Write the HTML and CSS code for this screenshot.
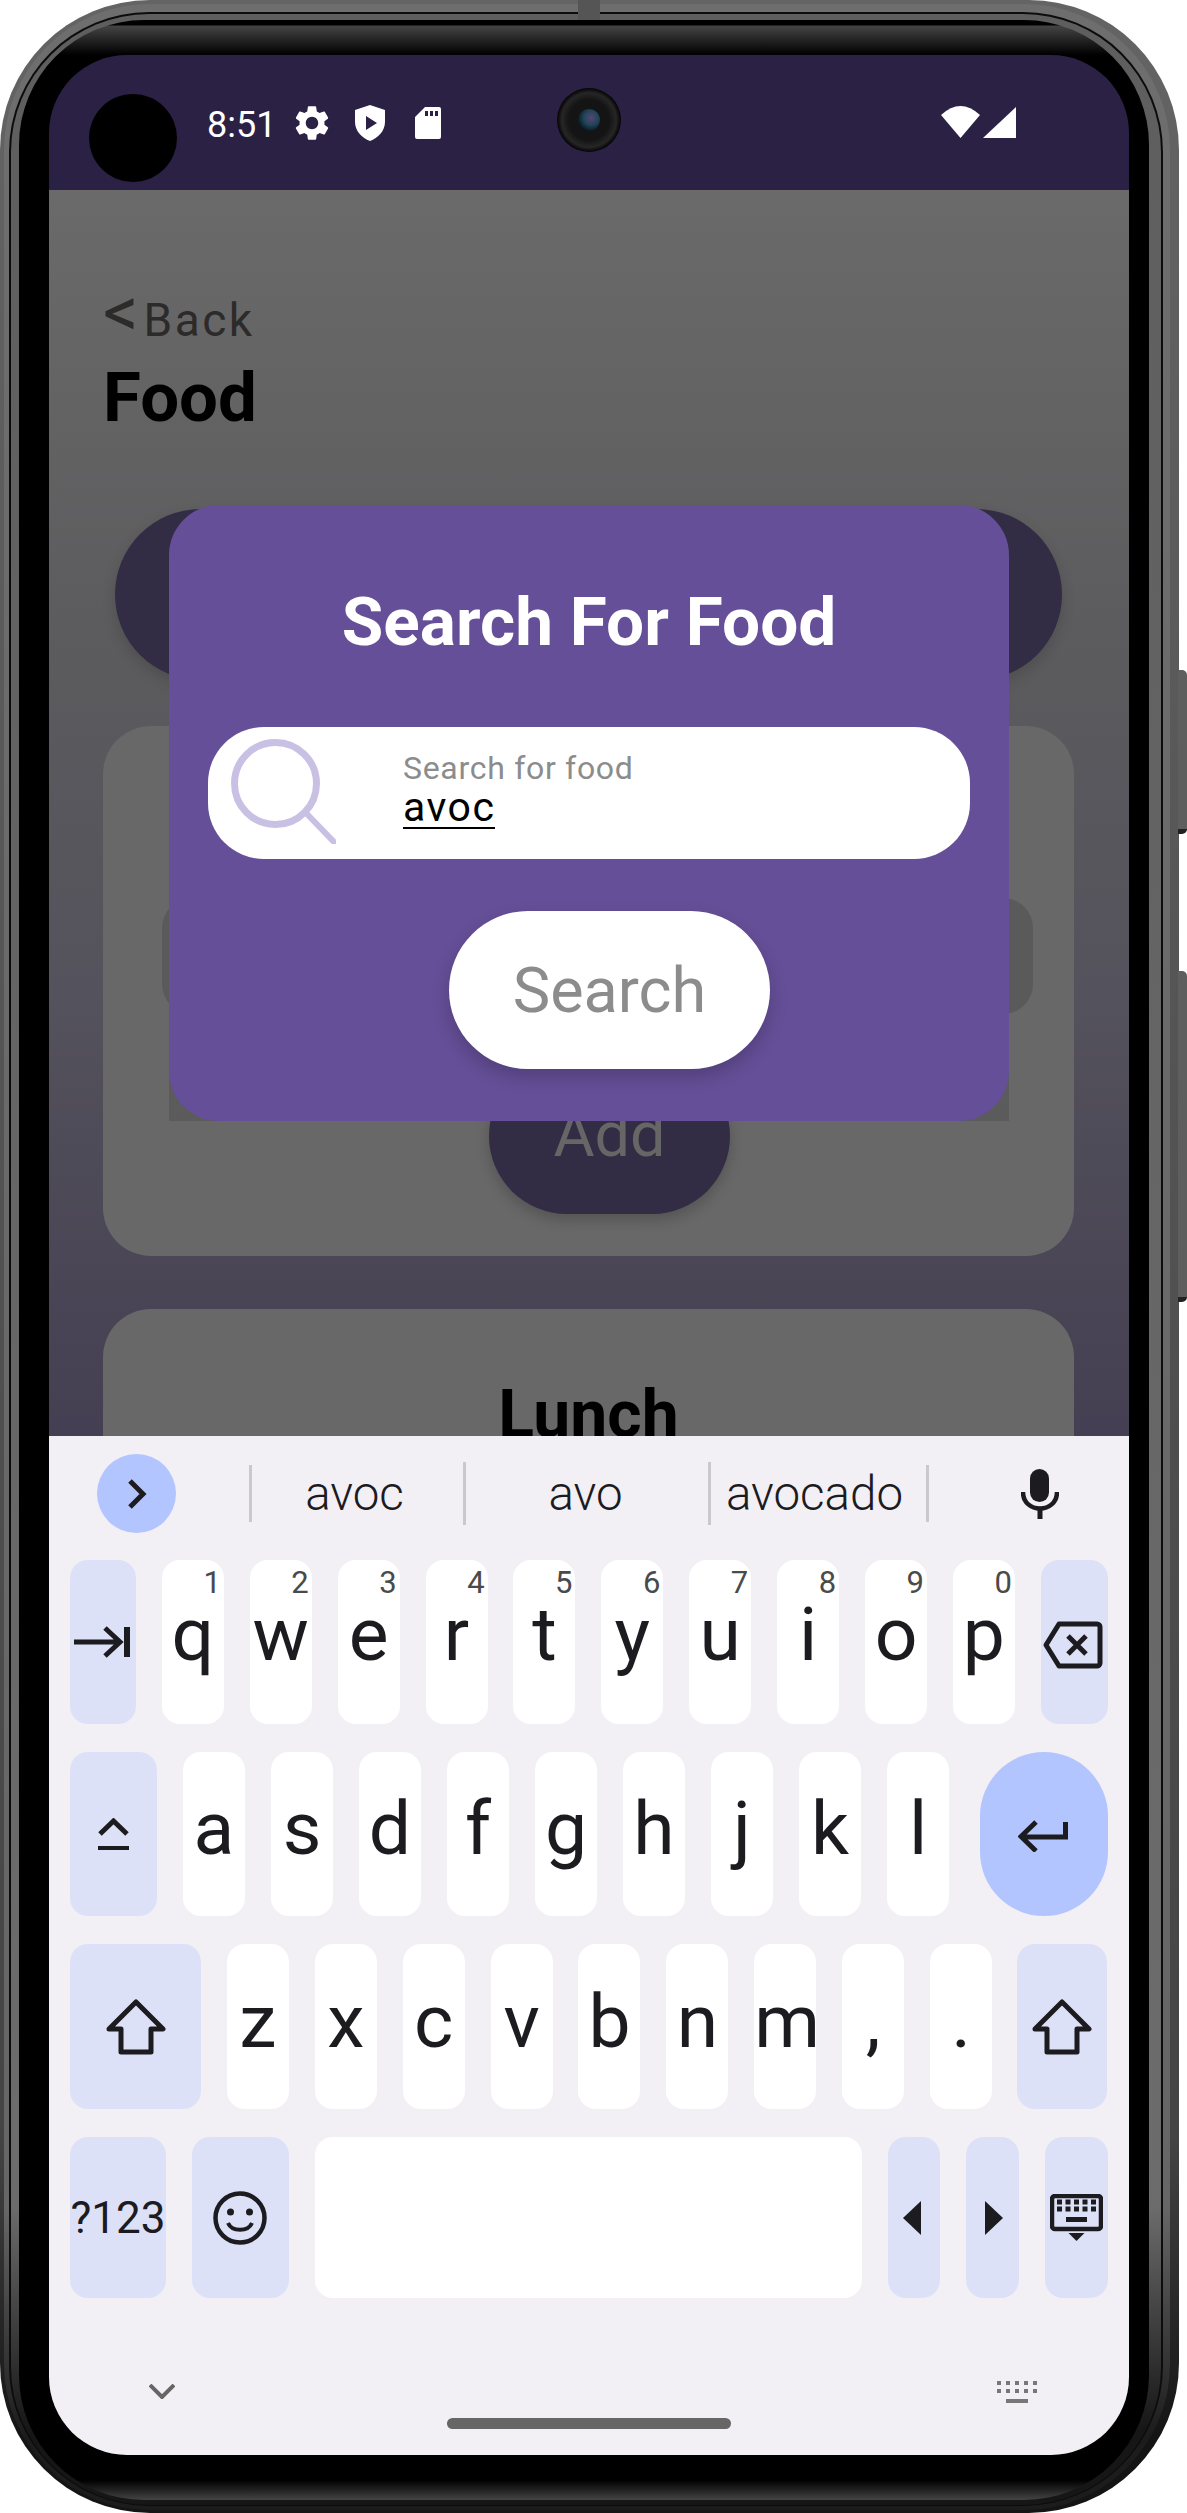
FILE: index.html
```html
<!DOCTYPE html>
<html lang="en">
<head>
    <meta charset="UTF-8">
    <title>Search For Food</title>
    <link rel="stylesheet" href="styles.css">
</head>
<body>
    <div class="device">
        <div class="side-btn btn-power"></div>
        <div class="side-btn btn-volume"></div>
        <div class="top-mark"></div>
        <div class="phone">
            <div class="ring-b">
                <div class="ring-c">
                    <div class="ring-d">
                        <div class="bezel">
                            <div class="screen">

                                <!-- status bar -->
                                <div class="status">
                                    <div class="hole"></div>
                                    <div class="time">8:51</div>
                                    <svg class="st-gear" width="34" height="34" viewBox="2.6 2.2 18.8 19.6"><path fill="#fff" d="M19.14 12.94c.04-.3.06-.61.06-.94 0-.32-.02-.64-.07-.94l2.03-1.58c.18-.14.23-.41.12-.61l-1.92-3.32c-.12-.22-.37-.29-.59-.22l-2.39.96c-.5-.38-1.03-.7-1.62-.94l-.36-2.54c-.04-.24-.24-.41-.48-.41h-3.84c-.24 0-.43.17-.47.41l-.36 2.54c-.59.24-1.13.57-1.62.94l-2.39-.96c-.22-.08-.47 0-.59.22L2.74 8.87c-.12.21-.08.47.12.61l2.03 1.58c-.05.3-.09.63-.09.94s.02.64.07.94l-2.03 1.58c-.18.14-.23.41-.12.61l1.92 3.32c.12.22.37.29.59.22l2.39-.96c.5.38 1.03.7 1.62.94l.36 2.54c.05.24.24.41.48.41h3.84c.24 0 .44-.17.47-.41l.36-2.54c.59-.24 1.13-.56 1.62-.94l2.39.96c.22.08.47 0 .59-.22l1.92-3.32c.12-.22.07-.47-.12-.61l-2.01-1.58zM12 15.6c-1.98 0-3.6-1.62-3.6-3.6s1.62-3.6 3.6-3.6 3.6 1.62 3.6 3.6-1.62 3.6-3.6 3.6z"/></svg>
                                    <svg class="st-shield" width="30" height="36" viewBox="0 0 30 36"><path fill="#fff" fill-rule="evenodd" d="M15 0 L30 5 V17 C30 26 23 33 15 36 C7 33 0 26 0 17 V5 Z M11 11 V25 L22 18 Z"/></svg>
                                    <svg class="st-sd" width="26" height="32" viewBox="0 0 26 32"><path fill="#fff" fill-rule="evenodd" d="M10 0 H24 a2 2 0 0 1 2 2 V30 a2 2 0 0 1-2 2 H2 a2 2 0 0 1-2-2 V10 Z M10 4 V9 H13 V4 Z M15 4 V9 H18 V4 Z M20 4 V9 H23 V4 Z"/></svg>
                                    <svg class="st-wifi" width="39" height="32" viewBox="0 0 39 32"><path fill="#fff" d="M0 9 Q19.5 -9 39 9 L19.5 32 Z"/></svg>
                                    <svg class="st-signal" width="33" height="31" viewBox="0 0 33 31"><path fill="#fff" d="M33 0 V31 H0 Z"/></svg>
                                </div>
                                <div class="camera"><div class="lens"></div></div>

                                <!-- the app, dimmed behind the dialog -->
                                <div class="app">
                                    <div class="back"><span class="back-arrow">&lt;</span><span class="back-text">Back</span></div>
                                    <h1 class="page-title">Food</h1>
                                    <div class="dark-pill"></div>
                                    <div class="card card-add">
                                        <div class="card-input"></div>
                                        <div class="add-btn">Add</div>
                                    </div>
                                    <div class="card card-meal">
                                        <h2 class="meal-title">Lunch</h2>
                                    </div>

                                    <div class="dialog">
                                        <div class="dialog-box">
                                            <h2 class="dialog-title">Search For Food</h2>
                                            <div class="search-field">
                                                <svg class="search-icon" width="105" height="105" viewBox="0 0 105 105"><ellipse cx="44.5" cy="44.5" rx="41" ry="41" fill="none" stroke="#c9c1e3" stroke-width="7"/><path d="M76 75 L103 103" fill="none" stroke="#c9c1e3" stroke-width="6" stroke-linecap="round"/></svg>
                                                <div class="search-text">
                                                    <div class="search-label">Search for food</div>
                                                    <div class="search-value">avoc</div>
                                                </div>
                                            </div>
                                            <div class="search-btn">Search</div>
                                        </div>
                                    </div>
                                </div>

                                <!-- keyboard -->
                                <div class="keyboard">
                                    <div class="suggest">
                                        <div class="suggest-toggle">
                                            <svg width="20" height="32" viewBox="0 0 20 32"><path d="M3 3 L16 16 L3 29" fill="none" stroke="#1c1b1f" stroke-width="5"/></svg>
                                        </div>
                                        <div class="divider short first"></div>
                                        <div class="word w1">avoc</div>
                                        <div class="divider"></div>
                                        <div class="word w2">avo</div>
                                        <div class="divider"></div>
                                        <div class="word w3">avocado</div>
                                        <div class="divider short"></div>
                                        <svg class="mic" width="38" height="50" viewBox="0 0 38 50"><rect x="9" y="0" width="19" height="33" rx="9.5" fill="#1c1b1f"/><path d="M2 23 C2 45 36 45 36 23" fill="none" stroke="#1c1b1f" stroke-width="4.5"/><path d="M19 38 V50" stroke="#1c1b1f" stroke-width="5"/></svg>
                                    </div>

                                    <div class="row row-1">
                                        <div class="key mod w-tab">
                                            <svg class="icon-tab" width="56" height="32" viewBox="0 0 56 32"><path d="M0 16 H47 M31 2 L46 16 L31 30" fill="none" stroke="#1c1b1f" stroke-width="5"/><rect x="50" y="1" width="6" height="30" fill="#1c1b1f"/></svg>
                                        </div>
                                        <div class="key">q<span class="hint">1</span></div>
                                        <div class="key">w<span class="hint">2</span></div>
                                        <div class="key">e<span class="hint">3</span></div>
                                        <div class="key">r<span class="hint">4</span></div>
                                        <div class="key">t<span class="hint">5</span></div>
                                        <div class="key">y<span class="hint">6</span></div>
                                        <div class="key">u<span class="hint">7</span></div>
                                        <div class="key">i<span class="hint">8</span></div>
                                        <div class="key">o<span class="hint">9</span></div>
                                        <div class="key">p<span class="hint">0</span></div>
                                        <div class="key mod w-back">
                                            <svg class="icon-back" width="60" height="48" viewBox="0 0 60 48"><path d="M16 3 H54 a3 3 0 0 1 3 3 V42 a3 3 0 0 1-3 3 H16 L3 24 Z" fill="none" stroke="#1c1b1f" stroke-width="5" stroke-linejoin="round"/><path d="M25 15 L43 33 M43 15 L25 33" fill="none" stroke="#1c1b1f" stroke-width="5"/></svg>
                                        </div>
                                    </div>

                                    <div class="row row-2">
                                        <div class="key mod w-alt">
                                            <svg width="31" height="32" viewBox="0 0 31 32"><path d="M2 16 L15.5 3 L29 16" fill="none" stroke="#1c1b1f" stroke-width="5"/><rect x="0" y="28" width="31" height="4" fill="#1c1b1f"/></svg>
                                        </div>
                                        <div class="key">a</div>
                                        <div class="key">s</div>
                                        <div class="key">d</div>
                                        <div class="key">f</div>
                                        <div class="key">g</div>
                                        <div class="key">h</div>
                                        <div class="key">j</div>
                                        <div class="key">k</div>
                                        <div class="key">l</div>
                                        <div class="key enter">
                                            <svg class="icon-enter" width="50" height="32" viewBox="0 0 50 32"><path d="M47.5 2 V17 H5 M18 2 L3 16.5 L18 31" fill="none" stroke="#1c1b1f" stroke-width="5"/></svg>
                                        </div>
                                    </div>

                                    <div class="row row-3">
                                        <div class="key mod w-shift">
                                            <svg width="60" height="56" viewBox="0 0 60 56"><path d="M30 3 L57 30 H45 V53 H15 V30 H3 Z" fill="none" stroke="#1c1b1f" stroke-width="5" stroke-linejoin="round"/></svg>
                                        </div>
                                        <div class="key">z</div>
                                        <div class="key">x</div>
                                        <div class="key">c</div>
                                        <div class="key">v</div>
                                        <div class="key">b</div>
                                        <div class="key">n</div>
                                        <div class="key">m</div>
                                        <div class="key">,</div>
                                        <div class="key">.</div>
                                        <div class="key mod w-shift-r">
                                            <svg width="60" height="56" viewBox="0 0 60 56"><path d="M30 3 L57 30 H45 V53 H15 V30 H3 Z" fill="none" stroke="#1c1b1f" stroke-width="5" stroke-linejoin="round"/></svg>
                                        </div>
                                    </div>

                                    <div class="row row-4">
                                        <div class="key mod w-num">?123</div>
                                        <div class="key mod w-emoji">
                                            <svg class="icon-emoji" width="54" height="54" viewBox="0 0 54 54"><circle cx="27" cy="27" r="24.5" fill="none" stroke="#1c1b1f" stroke-width="4.5"/><circle cx="17.5" cy="21" r="3.5" fill="#1c1b1f"/><circle cx="36.5" cy="21" r="3.5" fill="#1c1b1f"/><path d="M15 32 C19 41 35 41 39 32" fill="none" stroke="#1c1b1f" stroke-width="4"/></svg>
                                        </div>
                                        <div class="key w-space"></div>
                                        <div class="key mod w-left">
                                            <svg class="icon-left" width="18" height="34" viewBox="0 0 18 34"><path d="M18 0 V34 L0 17 Z" fill="#1c1b1f"/></svg>
                                        </div>
                                        <div class="key mod w-right">
                                            <svg class="icon-right" width="18" height="34" viewBox="0 0 18 34"><path d="M0 0 V34 L18 17 Z" fill="#1c1b1f"/></svg>
                                        </div>
                                        <div class="key mod w-hide">
                                            <svg width="53" height="47" viewBox="0 0 53 47"><rect x="2" y="2" width="49" height="33" rx="3" fill="none" stroke="#1c1b1f" stroke-width="4.5"/><path d="M7 8 h39 M7 15 h39" stroke="#1c1b1f" stroke-width="5" stroke-dasharray="5 3.5"/><rect x="16" y="23" width="21" height="5" fill="#1c1b1f"/><path d="M18.5 39 H34.5 L26.5 47 Z" fill="#1c1b1f"/></svg>
                                        </div>
                                    </div>

                                    <div class="nav">
                                        <svg class="nav-chevron" width="26" height="15" viewBox="0 0 26 15"><path d="M1 1 L13 13 L25 1" fill="none" stroke="#666" stroke-width="4"/></svg>
                                        <div class="home-pill"></div>
                                        <svg class="nav-keys" width="40" height="22" viewBox="0 0 40 22"><path d="M0 2 h40 M0 10 h40" stroke="#777" stroke-width="4" stroke-dasharray="4 5"/><rect x="9" y="18" width="22" height="4" fill="#777"/></svg>
                                    </div>
                                </div>

                            </div>
                        </div>
                    </div>
                </div>
            </div>
        </div>
    </div>
</body>
</html>
```

FILE: styles.css
```css
* {
    box-sizing: border-box;
}

body {
    margin: 0;
    background-color: #fff;
    font-family: 'Roboto', sans-serif;
}

h1, h2 {
    margin: 0;
}

/* phone body */
.device {
    position: relative;
    width: 1187px;
    height: 2513px;
    overflow: hidden;
}

.side-btn {
    position: absolute;
    left: 1178px;
    width: 9px;
    background-color: #5e5e5e;
    border-radius: 0 5px 5px 0;
    border-bottom: 5px solid #222;
}

.btn-power {
    top: 670px;
    height: 164px;
}

.btn-volume {
    top: 971px;
    height: 331px;
}

.top-mark {
    position: absolute;
    z-index: 2;
    left: 578px;
    top: 0;
    width: 22px;
    height: 20px;
    background-color: #555;
}

.phone {
    width: 1179px;
    height: 2513px;
    padding: 4px 9px 3px 4px;
    border-radius: 150px;
    background: linear-gradient(180deg, #646464, #444 85%, #141414 97%);
}

.ring-b {
    height: 100%;
    padding: 8px 7px 4px 5px;
    border-radius: 146px;
    background: linear-gradient(180deg, #6e6e6e, #666 88%, #1c1c1c 97%);
}

.ring-c {
    height: 100%;
    padding: 2px 2px 1px 2px;
    border-radius: 140px;
    background-color: #0c0c0c;
}

.ring-d {
    height: 100%;
    padding: 6px 12px 5px 8px;
    border-radius: 138px;
    background: linear-gradient(180deg, #5e5e5e, #6c6c6c 88%, #161616 97%);
}

.bezel {
    height: 100%;
    padding: 35px 20px 0 30px;
    border-radius: 125px;
    background: linear-gradient(180deg, #000 0, #000 5px, #444 6px, #000 35px, #000 calc(100% - 20px), #444 100%);
}

.screen {
    position: relative;
    width: 1080px;
    height: 2400px;
    border-radius: 78px;
    overflow: hidden;
}

/* status bar */
.status {
    display: flex;
    align-items: flex-start;
    height: 135px;
    padding: 0 113px 0 40px;
    background-color: #2a2145;
}

.hole {
    width: 88px;
    height: 88px;
    margin-top: 39px;
    border-radius: 50%;
    background-color: #000;
}

.time {
    margin: 50px 0 0 30px;
    font-size: 36px;
    line-height: 40px;
    color: #fff;
}

.st-gear {
    margin: 51px 0 0 19px;
}

.st-shield {
    margin: 50px 0 0 26px;
}

.st-sd {
    margin: 52px 0 0 30px;
}

.st-wifi {
    margin: 51px 0 0 auto;
}

.st-signal {
    margin: 52px 0 0 3px;
}

.camera {
    position: absolute;
    left: 508px;
    top: 33px;
    width: 64px;
    height: 64px;
    padding: 21px;
    border-radius: 50%;
    background: radial-gradient(circle, #141414 45%, #262626 60%, #050505 70%);
}

.lens {
    width: 22px;
    height: 22px;
    border-radius: 50%;
    background: radial-gradient(circle at 60% 40%, #5a4474 0, #1f4558 40%, #0a141c 75%);
}

/* dimmed app */
.app {
    position: relative;
    height: 1246px;
    padding: 105px 55px 0 54px;
    background: linear-gradient(180deg, #6a6a6a 0, #5c5c5e 35%, #54525c 65%, #443f52 100%);
    overflow: hidden;
}

.back {
    height: 51px;
    line-height: 50px;
    color: #2d2a2a;
}

.back-arrow {
    font-size: 70px;
    line-height: 0;
}

.back-text {
    margin-left: 5px;
    font-size: 46px;
    letter-spacing: 2.5px;
}

.page-title {
    margin-top: 14px;
    font-size: 69px;
    line-height: 76px;
    font-weight: 700;
    color: #000;
}

.dark-pill {
    height: 171px;
    margin: 73px 12px 0 12px;
    border-radius: 86px;
    background-color: #322c44;
    box-shadow: 0 6px 14px rgba(0, 0, 0, 0.15);
}

.card {
    background-color: #686868;
    border-radius: 48px;
}

.card-add {
    display: flex;
    flex-direction: column;
    height: 530px;
    margin-top: 46px;
    padding: 172px 41px 0 59px;
}

.card-input {
    height: 116px;
    border-radius: 30px;
    background-color: #5a5a5a;
}

.add-btn {
    flex: none;
    width: 241px;
    height: 156px;
    margin: 44px 0 0 327px;
    border-radius: 78px;
    background-color: #322c44;
    box-shadow: 0 6px 14px rgba(0, 0, 0, 0.2);
    font-size: 63px;
    line-height: 153px;
    text-align: center;
    color: #666;
}

.card-meal {
    height: 300px;
    margin-top: 53px;
    padding-top: 68px;
}

.meal-title {
    font-size: 66px;
    line-height: 76px;
    font-weight: 700;
    text-align: center;
    color: #000;
}

/* dialog */
.dialog {
    position: absolute;
    left: 120px;
    top: 315px;
    width: 840px;
    height: 616px;
    background: linear-gradient(180deg, transparent 50%, rgba(0, 0, 0, 0.12) 50%);
}

.dialog-box {
    display: flex;
    flex-direction: column;
    align-items: flex-start;
    height: 100%;
    padding: 80px 39px 0;
    border-radius: 50px;
    background-color: #654f98;
}

.dialog-title {
    width: 100%;
    font-size: 67.5px;
    line-height: 74px;
    font-weight: 700;
    text-align: center;
    color: #fff;
}

.search-field {
    display: flex;
    align-items: flex-start;
    width: 762px;
    height: 132px;
    margin-top: 68px;
    padding: 12px 0 0 23px;
    border-radius: 56px;
    background-color: #fff;
}

.search-text {
    margin: 11px 0 0 67px;
}

.search-label {
    font-size: 32px;
    line-height: 36px;
    letter-spacing: 0.7px;
    color: #8c8c8c;
}

.search-value {
    display: inline-block;
    height: 43px;
    padding-top: 2px;
    font-size: 41px;
    line-height: 39px;
    letter-spacing: 1.5px;
    color: #000;
    border-bottom: 2px solid #000;
}

.search-btn {
    width: 321px;
    height: 158px;
    margin: 52px 0 0 241px;
    border-radius: 79px;
    background-color: #fff;
    box-shadow: 0 8px 18px rgba(0, 0, 0, 0.2);
    font-size: 63px;
    line-height: 159px;
    text-align: center;
    color: #8c8c8c;
}

/* keyboard */
.keyboard {
    height: 1019px;
    background-color: #f2f0f5;
    color: #1c1b1f;
}

.suggest {
    display: flex;
    align-items: center;
    height: 124px;
    padding: 0 0 9px 48px;
}

.suggest-toggle {
    display: flex;
    align-items: center;
    justify-content: center;
    width: 79px;
    height: 79px;
    margin-right: 73px;
    border-radius: 50%;
    background-color: #b3c5fe;
}

.divider {
    width: 3px;
    height: 63px;
    background-color: #c9c8cd;
}

.divider.short {
    height: 57px;
}

.word {
    font-size: 47.5px;
    font-weight: 300;
    line-height: 60px;
    text-align: center;
}

.w1 {
    width: 211px;
    padding-right: 6px;
}

.w2 {
    width: 242px;
    padding-right: 3px;
}

.w3 {
    width: 215px;
    padding-right: 8px;
}

.mic {
    margin-left: 92px;
}

.row {
    display: flex;
    gap: 26px;
    height: 164px;
    margin-bottom: 28px;
    padding-left: 21px;
    font-size: 75px;
    line-height: 80px;
}

.row-1 {
    gap: 25.9px;
}

.row-1 .key {
    padding-top: 34px;
}

.row-2 .key {
    padding-top: 36px;
}

.row-3 {
    gap: 25.9px;
    height: 165px;
}

.row-3 .key {
    padding-top: 37px;
}

.row-4 {
    height: 161px;
    margin-bottom: 0;
}

.key {
    position: relative;
    flex: none;
    width: 62px;
    border-radius: 18px;
    background-color: #fff;
    text-align: center;
}

.hint {
    position: absolute;
    top: 7px;
    right: 3px;
    font-size: 31px;
    line-height: 31px;
    color: #4a4a4a;
}

.row .mod,
.row .enter {
    display: flex;
    align-items: center;
    justify-content: center;
    padding-top: 0;
    background-color: #dde1f7;
}

.row .enter {
    width: 128px;
    margin-left: 5px;
    border-radius: 64px;
    background-color: #b3c5fe;
}

.w-tab {
    width: 66px;
}

.icon-tab {
    margin-left: -3px;
}

.w-back {
    width: 67px;
}

.icon-back {
    margin: 6px 0 0 -3px;
}

.icon-enter {
    margin: 4px 0 0 -2px;
}

.icon-emoji {
    margin-left: -2px;
}

.icon-left {
    margin-left: -5px;
}

.icon-right {
    margin-left: 3px;
}

.w-alt {
    width: 87px;
}

.w-shift {
    width: 131px;
}

.w-shift-r {
    width: 90px;
    margin-left: -1px;
}

.w-num {
    width: 96px;
    font-size: 44px;
    line-height: 50px;
}

.w-emoji {
    width: 97px;
}

.w-space {
    width: 547px;
}

.w-left {
    width: 52px;
}

.w-right {
    width: 53px;
}

.w-hide {
    width: 63px;
}

.nav {
    display: flex;
    align-items: flex-start;
    height: 157px;
    padding: 83px 92px 0 100px;
}

.nav-chevron {
    margin-top: 3px;
}

.home-pill {
    width: 284px;
    height: 11px;
    margin: 37px 0 0 272px;
    border-radius: 6px;
    background-color: #666;
}

.nav-keys {
    margin-left: auto;
}
```
